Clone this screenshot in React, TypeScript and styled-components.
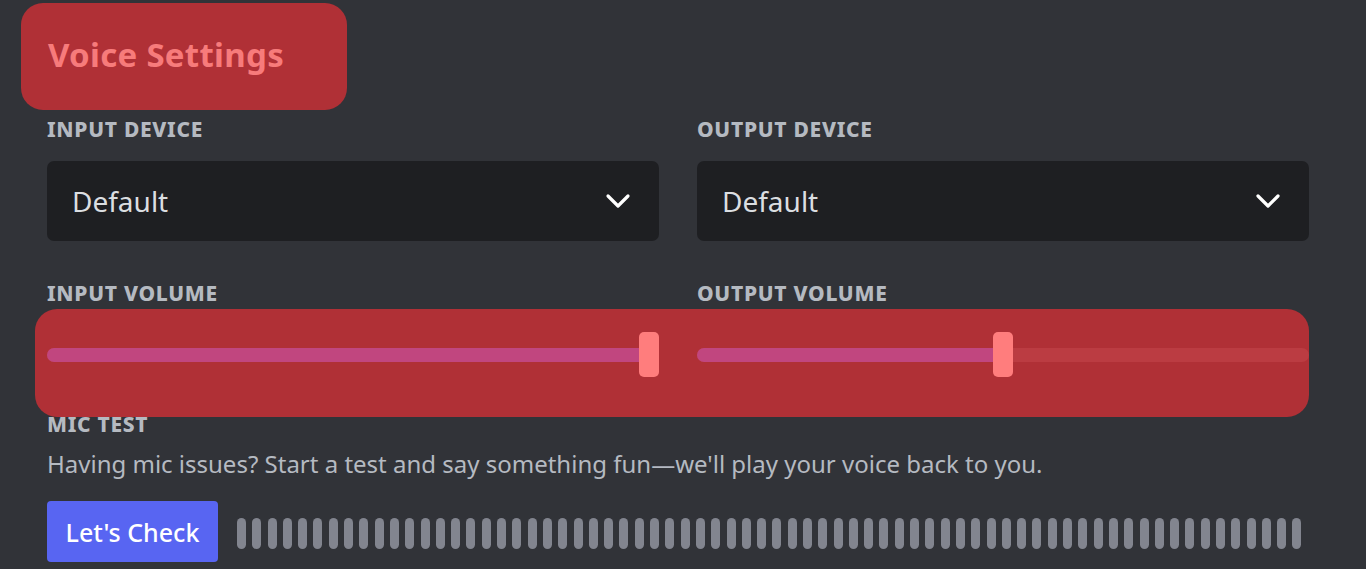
import React from "react";
import styled, { createGlobalStyle } from "styled-components";

const Global = createGlobalStyle`
  html, body { margin: 0; padding: 0; background: #313338; }
  body { font-family: "Noto Sans", "Open Sans", sans-serif; overflow: hidden; }
  * { box-sizing: border-box; }
`;

const Page = styled.div`
  width: 1366px;
  height: 569px;
  background: #313338;
  padding: 3px 57px 0 47px;
  overflow: hidden;
`;

const TitleBox = styled.div`
  margin-left: -26px;
  width: 326px;
  height: 107px;
  background: #b03036;
  border-radius: 22px;
  display: flex;
  align-items: center;
  padding: 0 0 4px 27px;
`;

const Title = styled.h1`
  margin: 0;
  font-size: 33px;
  font-weight: 700;
  color: #f77b7b;
  letter-spacing: 0.3px;
`;

const Columns = styled.div<{ $top: number }>`
  display: grid;
  grid-template-columns: 1fr 1fr;
  column-gap: 38px;
  margin-top: ${(p) => p.$top}px;
`;

const Label = styled.div<{ $top?: number }>`
  font-size: 21px;
  line-height: 22px;
  font-weight: 800;
  letter-spacing: 0.7px;
  color: #b5bac1;
  text-transform: uppercase;
  margin-top: ${(p) => p.$top ?? 0}px;
`;

const Select = styled.div`
  margin-top: 21px;
  height: 80px;
  background: #1e1f22;
  border-radius: 7px;
  display: flex;
  align-items: center;
  justify-content: space-between;
  padding: 0 28px 0 25px;
  color: #dbdee1;
  font-size: 28px;
`;

const Highlight = styled.div`
  margin: 5px 0 0 -12px;
  padding: 23px 0 0 12px;
  height: 108px;
  background: #b03036;
  border-radius: 22px;
  display: grid;
  grid-template-columns: 1fr 1fr;
  column-gap: 38px;
  align-items: start;
`;

const SliderWrap = styled.div`
  position: relative;
  height: 45px;
`;

const Track = styled.div`
  position: absolute;
  left: 0;
  right: 0;
  top: 16px;
  height: 14px;
  border-radius: 7px;
  background: #bb3c42;
`;

const Fill = styled.div`
  position: absolute;
  left: 0;
  top: 16px;
  height: 14px;
  border-radius: 7px;
  background: #c1467f;
`;

const Knob = styled.div`
  position: absolute;
  top: 0;
  width: 20px;
  height: 45px;
  border-radius: 5px;
  background: #ff7d7d;
`;

const Description = styled.p`
  margin: 14px 0 0;
  font-size: 24px;
  line-height: 30px;
  color: #b5bac1;
`;

const TestRow = styled.div`
  margin-top: 22px;
  display: flex;
  align-items: center;
`;

const Button = styled.button`
  width: 171px;
  height: 61px;
  border: none;
  border-radius: 4px;
  background: #5865f2;
  color: #ffffff;
  font-family: "Noto Sans", "Open Sans", sans-serif;
  font-size: 25px;
  font-weight: 500;
  padding: 0;
`;

const Bars = styled.div`
  flex: 1;
  margin: 3px 7px 0 19px;
  display: flex;
  justify-content: space-between;
`;

const Bar = styled.span`
  width: 9px;
  height: 31px;
  border-radius: 5px;
  background: #82858f;
`;

const Chevron = () => (
  <svg width="26" height="16" viewBox="0 0 26 16" fill="none">
    <polyline
      points="3,3 13,13 23,3"
      stroke="#ffffff"
      strokeWidth="3.2"
      strokeLinecap="round"
      strokeLinejoin="round"
    />
  </svg>
);

const Slider = ({ value, width }: { value: number; width: number }) => {
  const left = value * (width - 20);
  return (
    <SliderWrap>
      <Track />
      <Fill style={{ width: left + 10 }} />
      <Knob style={{ left }} />
    </SliderWrap>
  );
};

export default function App() {
  return (
    <>
      <Global />
      <Page>
        <TitleBox>
          <Title>Voice Settings</Title>
        </TitleBox>
        <Columns $top={8}>
          <div>
            <Label>Input Device</Label>
            <Select>
              <span>Default</span>
              <Chevron />
            </Select>
          </div>
          <div>
            <Label>Output Device</Label>
            <Select>
              <span>Default</span>
              <Chevron />
            </Select>
          </div>
        </Columns>
        <Columns $top={41}>
          <Label>Input Volume</Label>
          <Label>Output Volume</Label>
        </Columns>
        <Highlight>
          <Slider value={1} width={612} />
          <Slider value={0.5} width={612} />
        </Highlight>
        <Label $top={-4}>Mic Test</Label>
        <Description>
          Having mic issues? Start a test and say something fun—we'll play your voice back to you.
        </Description>
        <TestRow>
          <Button>Let's Check</Button>
          <Bars>
            {Array.from({ length: 70 }, (_, i) => (
              <Bar key={i} />
            ))}
          </Bars>
        </TestRow>
      </Page>
    </>
  );
}
